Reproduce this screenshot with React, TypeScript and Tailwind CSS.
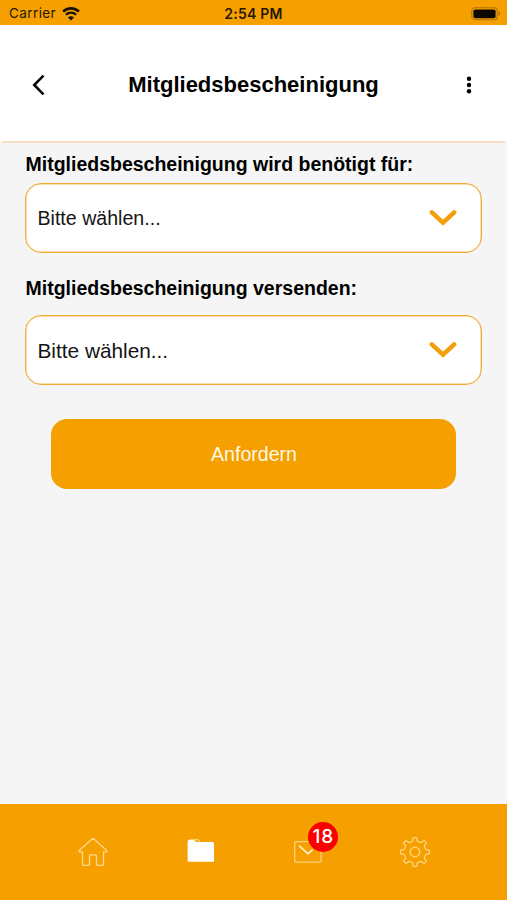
import type { ReactNode } from 'react';

function WifiIcon() {
  return (
    <svg width="18" height="14" viewBox="0 0 18 14" fill="none" stroke="#171100">
      <path d="M1.1 4.6a11.3 11.3 0 0 1 15.8 0" strokeWidth="2.6" />
      <path d="M3.9 7.8a7.3 7.3 0 0 1 10.2 0" strokeWidth="2.3" />
      <path d="M9 13.6 6 10.6a4.3 4.3 0 0 1 6 0z" fill="#171100" stroke="none" />
    </svg>
  );
}

function BatteryIcon() {
  return (
    <svg width="30" height="14" viewBox="0 0 30 14" fill="none">
      <rect x="0.8" y="0.8" width="25.4" height="12" rx="3.4" stroke="#ad7307" strokeWidth="1.1" />
      <rect x="2.4" y="2.4" width="22.2" height="8.8" rx="1.8" fill="#0c0700" />
      <path d="M27.6 4.6c2 .5 2 4 0 4.5z" fill="#ad7307" />
    </svg>
  );
}

function HomeIcon() {
  return (
    <svg width="30" height="30" viewBox="0 0 30 30" fill="none" stroke="#ffd98d" strokeWidth="1.3" strokeLinejoin="round">
      <path d="M15 1.3 1.2 13.5c-.5.8 0 1.5.8 1.3H4.500V27.400q0 1 1 1H10.500q1 0 1-1V19q0-1.200 1.200-1.200h4.600q1.200 0 1.200 1.200v8.400q0 1 1 1H24.500q1 0 1-1V14.800H28c.8.2 1.300-.5.8-1.300z" />
    </svg>
  );
}

function FolderIcon() {
  return (
    <svg width="28" height="24" viewBox="0 0 28 24">
      <path d="M.6 22.2V3.200q0-2.600 2.600-2.600h3.200l2.600 2.400h16.400q1.600 0 1.600 1.500v17.700q0 .6-.6.6H1.200q-.6 0-.6-.8z" fill="#fff" />
      <path d="M6.600.8H11q1.300 0 1.500 2" fill="none" stroke="#ffe3ad" />
    </svg>
  );
}

function MailIcon() {
  return (
    <svg width="28" height="22" viewBox="0 0 28 22" fill="none">
      <rect x="0.7" y="0.7" width="26.4" height="20.4" rx="1.3" stroke="#ffd080" strokeWidth="1.3" />
      <path d="m5 4.500 9 8.300 4.600-4.200" stroke="#fff1d2" strokeWidth="1.7" />
    </svg>
  );
}

function GearIcon() {
  return (
    <svg width="32" height="32" viewBox="-16 -16 32 32" fill="none" stroke="#ffd583" strokeWidth="1.3" strokeLinejoin="round">
      <path d={gearPath} />
      <circle r="4.800" />
    </svg>
  );
}

// eight teeth, one every 45 degrees
const gearPath = (() => {
  const at = (deg: number, r: number) => {
    const a = (deg * Math.PI) / 180;
    return `${(r * Math.sin(a)).toFixed(2)} ${(-r * Math.cos(a)).toFixed(2)}`;
  };
  let d = '';
  for (let i = 0; i < 8; i++) {
    const c = i * 45;
    d += `${i ? 'L' : 'M'}${at(c - 14, 11)}Q${at(c - 10, 11.3)} ${at(c - 9.5, 12.5)}`;
    d += `Q${at(c - 9, 14.6)} ${at(c - 4, 14.5)}L${at(c + 4, 14.5)}`;
    d += `Q${at(c + 9, 14.6)} ${at(c + 9.5, 12.5)}Q${at(c + 10, 11.3)} ${at(c + 14, 11)}`;
  }
  return d + 'Z';
})();

function SelectField({ children }: { children: ReactNode }) {
  return (
    <button className="flex h-[70px] w-full items-center justify-between rounded-[16px] border border-[#efac35] bg-white pt-[1px] pr-6 pl-[11.5px] text-left text-[#141414] shadow-[inset_0_0_0_0.5px_#f3bd60]">
      {children}
      <svg width="28" height="18" viewBox="0 0 28 18" fill="none" className="mb-[1px]">
        <path d="m2.800 3.300 11.200 10.400L25.200 3.300" stroke="#f39f0b" strokeWidth="4.400" strokeLinecap="round" />
      </svg>
    </button>
  );
}

export default function App() {
  return (
    <div className="flex h-[900px] w-[507px] flex-col bg-[#f5f5f5] font-['Liberation_Sans',Arial,sans-serif] text-black">
      {/* Status bar */}
      <div className="grid h-[25px] grid-cols-3 items-center bg-[#f5a000] pt-[2px] font-[Inter,sans-serif] text-[#251800]">
        <div className="flex items-center gap-[6px] pl-[9px]">
          <span className="text-[13.5px] tracking-[0.4px]">Carrier</span>
          <WifiIcon />
        </div>
        <span className="text-center text-[14px] font-semibold tracking-[0.25px]">2:54 PM</span>
        <div className="flex justify-end pr-[6px]">
          <BatteryIcon />
        </div>
      </div>

      {/* Header */}
      <header className="flex h-[116px] items-center justify-between bg-white pt-[3px] pr-[34px] pl-8">
        <button title="Zurück">
          <svg width="14" height="22" viewBox="0 0 14 22" fill="none" stroke="#000" strokeWidth="2.500">
            <path d="M11.500 1.700 2.200 11l9.300 9.300" />
          </svg>
        </button>
        <h1 className="-ml-[4px] text-[22px] font-bold">Mitgliedsbescheinigung</h1>
        <button title="Menü">
          <svg width="8" height="18" viewBox="0 0 8 18">
            <circle cx="4" cy="2.700" r="2.200" />
            <circle cx="4" cy="9" r="2.200" />
            <circle cx="4" cy="15.300" r="2.200" />
          </svg>
        </button>
      </header>
      <div className="mx-[2px] h-[2px] bg-[#f7dfc8]" />

      {/* Form */}
      <main className="flex grow flex-col px-[25px] pt-[9px]">
        <label className="mb-[7px] pl-[0.5px] text-[19.5px] leading-6 font-bold">Mitgliedsbescheinigung wird benötigt für:</label>
        <SelectField>
          <span className="text-[19.6px]">Bitte wählen...</span>
        </SelectField>
        <label className="mt-[23px] mb-[15px] pl-[0.5px] text-[19.5px] leading-6 font-bold">Mitgliedsbescheinigung versenden:</label>
        <SelectField>
          <span className="text-[20.8px]">Bitte wählen...</span>
        </SelectField>
        <button className="mx-[26px] mt-[34px] h-[70px] rounded-[16px] bg-[#f5a000] pt-[2px] pl-[1px] text-[19.6px] text-[#fff8e5]">
          Anfordern
        </button>
      </main>

      {/* Tab bar */}
      <nav className="grid h-[96px] grid-cols-4 items-center bg-[#f5a000] pr-[38px] pl-[39px]">
        <div className="flex justify-center">
          <HomeIcon />
        </div>
        <div className="flex justify-center pb-[2px] pl-[1px]">
          <FolderIcon />
        </div>
        <div className="flex justify-center pl-[1px]">
          <div className="relative">
            <MailIcon />
            <span className="absolute -top-[19px] left-[14px] flex size-[30px] items-center justify-center rounded-full bg-[#fb0000] font-[Inter,sans-serif] text-[19px] font-medium tracking-[0.8px] text-white">
              18
            </span>
          </div>
        </div>
        <div className="flex justify-center">
          <GearIcon />
        </div>
      </nav>
    </div>
  );
}
